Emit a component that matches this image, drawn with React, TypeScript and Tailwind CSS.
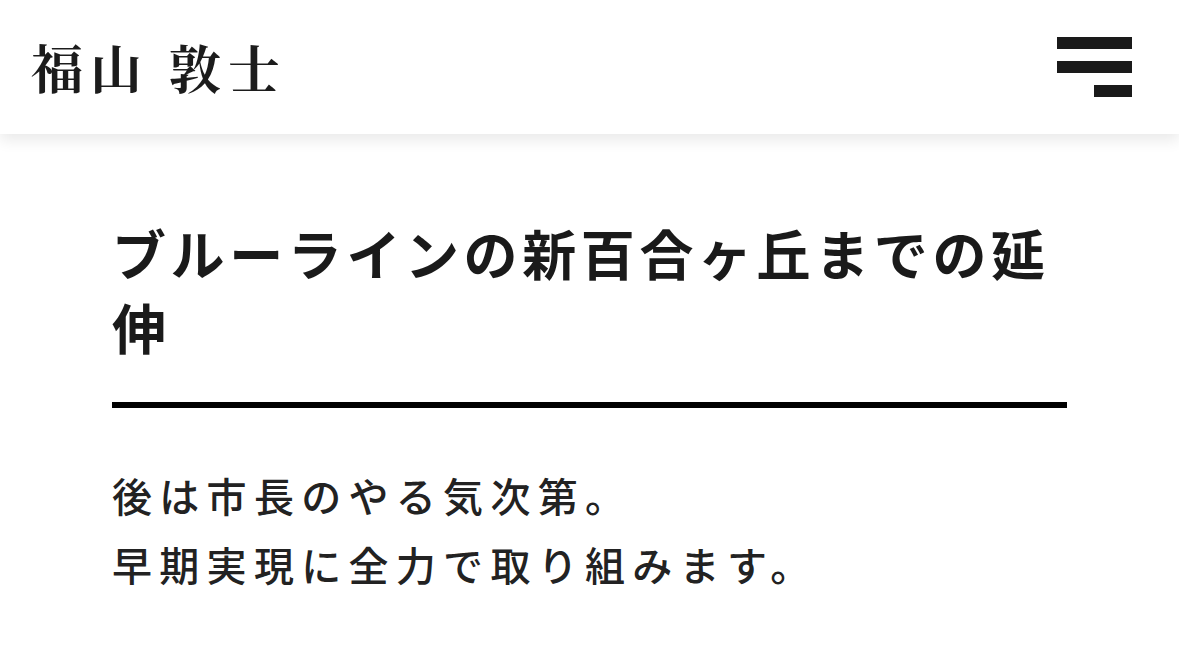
export default function App() {
  return (
    <div className="min-h-[658px] w-full bg-white text-[#1c1c1c] [font-family:'Noto_Sans_CJK_JP','Noto_Sans',sans-serif]">
      <header className="relative z-10 flex h-[134px] items-center justify-between bg-white pl-[31px] pr-[47px] shadow-[0_6px_14px_rgba(0,0,0,0.09)]">
        <div className="text-[52px] font-bold leading-none tracking-[7px] whitespace-pre [font-family:'Noto_Serif_CJK_JP','Noto_Sans_CJK_JP',serif]">
          福山 敦士
        </div>
        <button className="flex w-[75px] flex-col items-end gap-[12px]" aria-label="menu">
          <span className="block h-[12px] w-[75px] bg-[#1a1a1a]" />
          <span className="block h-[12px] w-[75px] bg-[#1a1a1a]" />
          <span className="block h-[12px] w-[38px] bg-[#1a1a1a]" />
        </button>
      </header>

      <main className="px-[112px] pt-[82px]">
        <h1 className="text-[54px] font-bold leading-[74px] tracking-[4.6px] text-[#1a1a1a]">
          ブルーラインの新百合ヶ丘までの延伸
        </h1>
        <div className="mt-[38px] h-[6px] w-full bg-black" />
        <div className="mt-[53px] text-[40px] font-medium leading-[69px] tracking-[7.3px] text-[#222]">
          <p>後は市長のやる気次第。</p>
          <p>早期実現に全力で取り組みます。</p>
        </div>
      </main>
    </div>
  );
}
